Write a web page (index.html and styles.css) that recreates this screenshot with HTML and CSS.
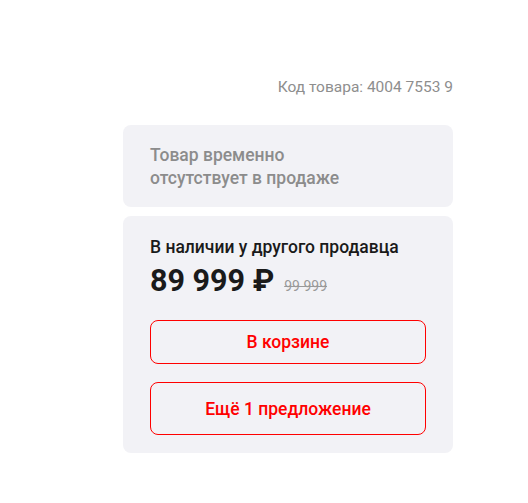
FILE: index.html
```html
<!DOCTYPE html>
<html lang="ru">

<head>
    <meta charset="utf-8" />
    <title>Товар</title>
    <link rel="stylesheet" href="styles.css">
</head>

<body>

    <div class="buy-block">
        <div class="product-code">Код товара: 4004 7553 9</div>

        <div class="card card-muted">
            <p class="unavailable">Товар временно<br>отсутствует в продаже</p>
        </div>

        <div class="card">
            <p class="seller">В наличии у другого продавца</p>
            <div class="price-row">
                <span class="price">89 999 ₽</span>
                <span class="old-price">99 999</span>
            </div>
            <button type="button" class="btn btn-cart">В корзине</button>
            <button type="button" class="btn btn-offers">Ещё 1 предложение</button>
        </div>
    </div>

</body>

</html>
```

FILE: styles.css
```css
* {
    box-sizing: border-box;
}

body {
    margin: 0;
    background: #fff;
    font-family: Roboto, "Liberation Sans", sans-serif;
}

.buy-block {
    width: 330px;
    margin-left: 123px;
    padding-top: 78px;
}

.product-code {
    text-align: right;
    font-size: 15.5px;
    line-height: 18px;
    color: #8e8e8e;
    margin-bottom: 29px;
}

.card {
    background: #f2f2f6;
    border-radius: 8px;
    padding: 20px 27px 18px;
}

.card + .card {
    margin-top: 9px;
}

.card-muted {
    padding: 19px 27px 17px;
}

.unavailable {
    margin: 0;
    font-size: 17.5px;
    line-height: 23px;
    font-weight: 500;
    color: #8c8c8c;
}

.seller {
    margin: 0;
    font-size: 17.5px;
    line-height: 22px;
    font-weight: 500;
    color: #1a1a1a;
}

.price-row {
    display: flex;
    align-items: baseline;
    gap: 10px;
    margin-top: 5px;
}

.price {
    font-size: 30.5px;
    line-height: 36px;
    font-weight: 700;
    color: #1a1a1a;
}

.old-price {
    font-size: 14px;
    color: #999;
    text-decoration: line-through;
}

.btn {
    display: block;
    width: 100%;
    background: transparent;
    border: 1px solid #f00;
    border-radius: 8px;
    color: #f00;
    font-family: inherit;
    font-size: 17.5px;
    font-weight: 500;
    cursor: pointer;
}

.btn-cart {
    height: 44px;
    margin-top: 21px;
}

.btn-offers {
    height: 53px;
    margin-top: 18px;
}
```
